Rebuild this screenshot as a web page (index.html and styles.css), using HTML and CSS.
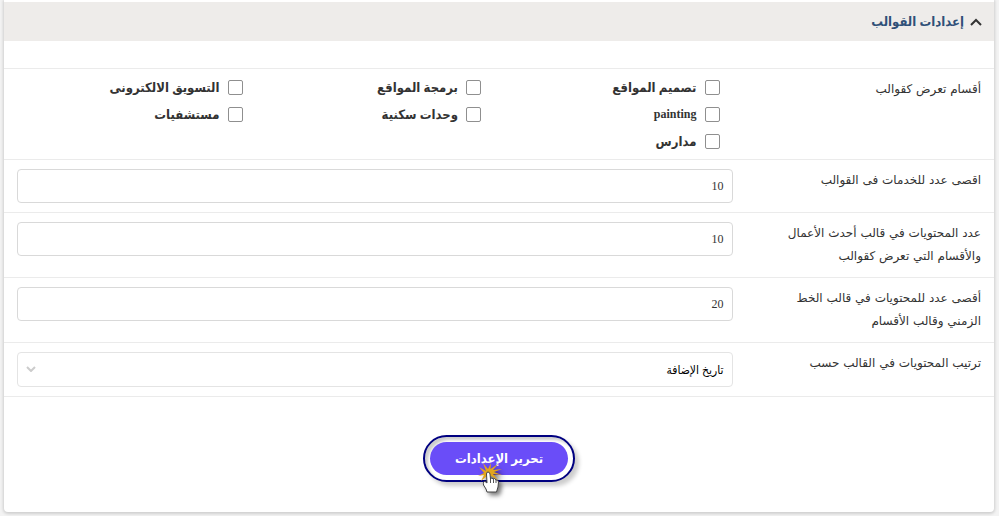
FILE: index.html
```html
<!DOCTYPE html>
<html lang="ar" dir="rtl">
<head>
<meta charset="UTF-8">
<meta name="viewport" content="width=device-width, initial-scale=1.0">
<title>إعدادات القوالب</title>
<link rel="stylesheet" href="styles.css">
</head>
<body>
<form class="panel">
    <h2 class="panel-title">
        <svg class="chevron" width="12" height="8" viewBox="0 0 12 8"><path d="M1 7 L6 2 L11 7"/></svg>
        <span>إعدادات القوالب</span>
    </h2>
    <div class="row" role="group" aria-labelledby="sections-label">
        <span class="row-label" id="sections-label">أقسام تعرض كقوالب</span>
        <div class="row-field checks">
            <label class="check"><input type="checkbox"><span>تصميم المواقع</span></label>
            <label class="check"><input type="checkbox"><span>برمجة المواقع</span></label>
            <label class="check"><input type="checkbox"><span>التسويق الالكترونى</span></label>
            <label class="check"><input type="checkbox"><span class="latin" lang="en">painting</span></label>
            <label class="check"><input type="checkbox"><span>وحدات سكنية</span></label>
            <label class="check"><input type="checkbox"><span>مستشفيات</span></label>
            <label class="check"><input type="checkbox"><span>مدارس</span></label>
        </div>
    </div>
    <div class="row">
        <label class="row-label" for="max-services">اقصى عدد للخدمات فى القوالب</label>
        <div class="row-field"><input class="control" id="max-services" type="text" value="10"></div>
    </div>
    <div class="row">
        <label class="row-label" for="latest-count">عدد المحتويات في قالب أحدث الأعمال<br>والأقسام التي تعرض كقوالب</label>
        <div class="row-field"><input class="control" id="latest-count" type="text" value="10"></div>
    </div>
    <div class="row">
        <label class="row-label" for="timeline-count">أقصى عدد للمحتويات في قالب الخط<br>الزمني وقالب الأقسام</label>
        <div class="row-field"><input class="control" id="timeline-count" type="text" value="20"></div>
    </div>
    <div class="row">
        <label class="row-label" for="order-by">ترتيب المحتويات في القالب حسب</label>
        <div class="row-field select-wrap">
            <select class="control select" id="order-by"><option>تاريخ الإضافة</option></select>
            <svg class="select-arrow" width="10" height="6" viewBox="0 0 10 6"><path d="M1 1 L5 5 L9 1"/></svg>
        </div>
    </div>
    <div class="actions">
        <div class="ring">
            <button class="submit" type="button">تحرير الإعدادات</button>
            <svg class="pointer" width="36" height="44" viewBox="0 0 36 44">
                <path class="burst" d="M8 9 L5 1 L10 7 L13 1 L12.500 7 L20 2 L15 8 L24 7 L16 10 L24 13 L15 12 L20 18 L13 14 L9 14 L3 19 L6 13 L0 14 L6 11 L1 5 Z"/>
                <path class="hand" d="M8.500 12 Q8.500 10 10 10 Q11.500 10 12 12 L12.500 17 Q14 15 15 17 Q17 15.500 18 18 Q20 17.500 20.500 20 L20 25 L18.500 30 L9 30 L8 27 L5.500 23 Q5 19 7 19.500 L9 21 Z"/>
                <path class="fingers" d="M12.500 17 L12.500 21 M15.500 17 L15.500 21 M18 18 L18 21"/>
            </svg>
        </div>
    </div>
</form>
</body>
</html>
```

FILE: styles.css
```css
* {
    box-sizing: border-box;
}
body {
    margin: 0;
    padding: 0 5px 4px 4px;
    background-color: #f3f3f3;
    color: #333;
    font-family: "Liberation Serif", "DejaVu Sans Condensed", "DejaVu Sans", serif;
    font-size: 13px;
}
.panel {
    padding-top: 2px;
    background-color: #fff;
    border-radius: 0 0 4px 4px;
    box-shadow: 0 1px 3px 1px rgba(0, 0, 0, 0.15);
}
.panel-title {
    display: flex;
    align-items: center;
    gap: 6px;
    height: 39px;
    margin: 0 0 27px;
    padding: 0 12px;
    background-color: #eeecea;
    color: #2f5078;
    font-size: 13px;
}
.chevron {
    fill: none;
    stroke: #333;
    stroke-width: 2;
}
.row {
    display: flex;
    border-top: 1px solid #ebebeb;
}
.row:nth-last-child(2) {
    border-bottom: 1px solid #ebebeb;
}
.row-label {
    width: 25%;
    padding: 9px 13px;
    font-family: "DejaVu Sans", sans-serif;
    font-size: 12px;
    line-height: 23px;
    white-space: nowrap;
}
.row-field {
    width: 75%;
    padding: 9px 14px 9px 13px;
}
.checks {
    display: grid;
    grid-template-columns: repeat(3, 1fr);
    padding: 5px 14px 4px 13px;
}
.check {
    display: flex;
    align-items: center;
    gap: 8px;
    height: 27px;
    padding: 0 13px;
    font-weight: bold;
}
.check input {
    appearance: none;
    width: 15px;
    height: 15px;
    margin: 0;
    border: 1px solid #8f8f8f;
    border-radius: 2px;
    background-color: #fff;
}
.latin {
    font-size: 12px;
}
.control {
    display: block;
    width: 100%;
    height: 34px;
    padding: 0 8px;
    border: 1px solid #d9d9d9;
    border-radius: 4px;
    background-color: #fff;
    color: #333;
    font-family: inherit;
    font-size: 12px;
}
.select-wrap {
    position: relative;
}
.select {
    appearance: none;
    height: 35px;
    border-color: #e4e4e4;
    color: #000;
}
.select-arrow {
    position: absolute;
    left: 22px;
    top: 23px;
    fill: none;
    stroke: #ccc;
    stroke-width: 2;
    pointer-events: none;
}
.actions {
    display: flex;
    justify-content: center;
    padding: 38px 0 30px;
}
.ring {
    position: relative;
    padding: 5px;
    border: 2px solid #000080;
    border-radius: 24px;
    background-color: #fff;
    box-shadow: 4px 4px 4px rgba(0, 0, 0, 0.2), inset 3px 3px 3px rgba(0, 0, 0, 0.2);
}
.submit {
    display: block;
    width: 138px;
    height: 33px;
    padding: 0;
    border: 0;
    border-radius: 17px;
    background-color: #6a4df8;
    color: #fff;
    font: inherit;
    font-weight: bold;
}
.pointer {
    position: absolute;
    left: 53px;
    top: 25px;
    filter: drop-shadow(3px 3px 2px rgba(0, 0, 0, 0.5));
    pointer-events: none;
}
.burst {
    fill: #e2a51d;
}
.hand {
    fill: #fff;
    stroke: #444;
    stroke-width: 1;
}
.fingers {
    fill: none;
    stroke: #555;
    stroke-width: 1;
}
```
